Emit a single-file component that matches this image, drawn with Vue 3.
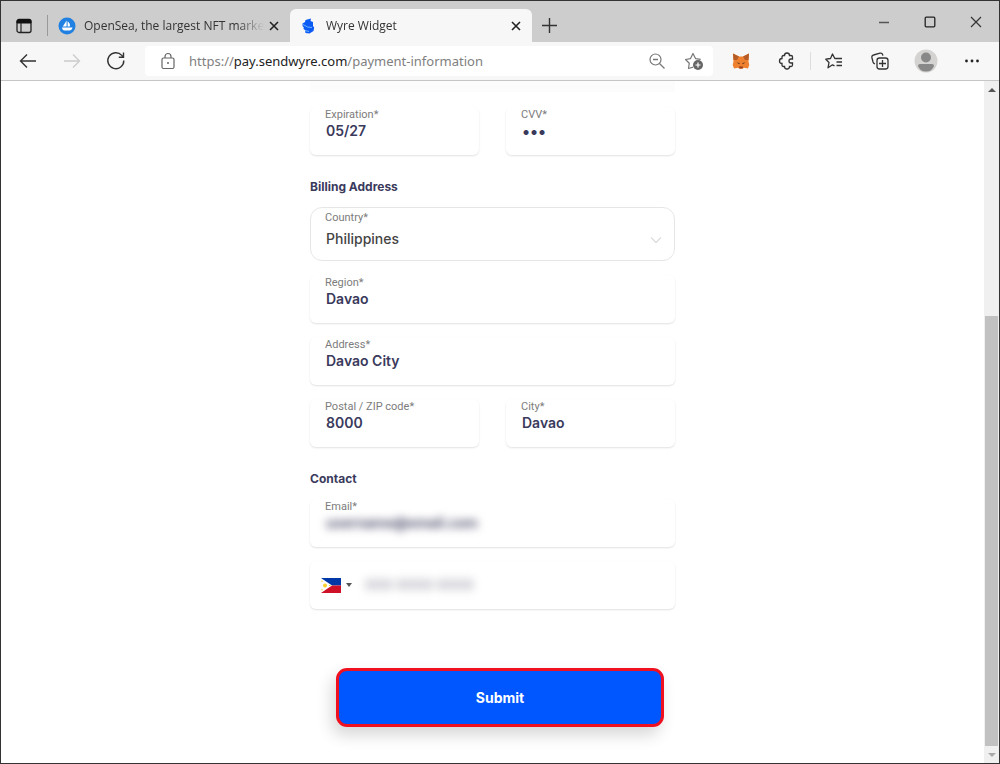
<template>
  <div class="browser">
    <!-- Tab strip -->
    <header class="tab-strip">
      <button class="tab-menu" type="button" aria-label="Tab actions">
        <svg width="18" height="18" viewBox="0 0 18 18">
          <rect x="2" y="2.500" width="14" height="13" rx="2" fill="none" stroke="#222" stroke-width="1.300" />
          <path d="M2 6V4.500Q2 2.500 4 2.500h10q2 0 2 2V6z" fill="#111" stroke="#111" />
          <path d="M6 6v9" stroke="#222" stroke-width="1.200" />
        </svg>
      </button>
      <span class="strip-divider"></span>

      <div v-for="tab in tabs" :key="tab.id" class="tab" :class="{ active: tab.id === activeTab }">
        <svg v-if="tab.id === 'opensea'" class="favicon" width="18" height="18" viewBox="0 0 18 18">
          <circle cx="9" cy="9" r="8.500" fill="#2081e2" />
          <path d="M8.600 3.500v6H4.800zM9.600 4.200q3 2.300 2.200 5.300H9.600z" fill="#fff" />
          <path d="M3.800 10.500h10.700q-.6 3-3.300 3H6.500q-2.300-.5-2.700-3z" fill="#fff" />
        </svg>
        <svg v-else class="favicon" width="18" height="18" viewBox="0 0 18 18">
          <path d="M5.500 3 11 1.500l-.5 2.500 2.500 1v4l1.200 1.500-.7 3.500-4 2.500-4-.5-.5-3-1.500-1 .3-1.500L2.500 9V6.500L5 5z" fill="#0d5bf5" />
          <path d="M3 7.500 7.500 10l4.500.5M5 13.500l4 1" stroke="#6fb4ff" fill="none" />
        </svg>
        <button class="tab-title" type="button" @click="activeTab = tab.id">{{ tab.title }}</button>
        <button class="tab-close" type="button" :aria-label="'Close ' + tab.title">
          <svg width="10" height="10" viewBox="0 0 10 10"><path d="M1 1l8 8M9 1 1 9" stroke="#222" stroke-width="1.600" /></svg>
        </button>
      </div>

      <button class="new-tab" type="button" aria-label="New tab">
        <svg width="15" height="15" viewBox="0 0 15 15"><path d="M7.500 0v15M0 7.500h15" stroke="#333" stroke-width="1.400" /></svg>
      </button>

      <div class="window-controls">
        <button type="button" aria-label="Minimize">
          <svg width="12" height="12" viewBox="0 0 12 12"><path d="M1 6.500h10" stroke="#555" stroke-width="1.500" /></svg>
        </button>
        <button type="button" aria-label="Maximize">
          <svg width="12" height="12" viewBox="0 0 12 12"><rect x="1.200" y="1.200" width="9.600" height="9.600" rx="1" fill="none" stroke="#222" stroke-width="1.300" /></svg>
        </button>
        <button type="button" aria-label="Close">
          <svg width="12" height="12" viewBox="0 0 12 12"><path d="M1 1l10 10M11 1 1 11" stroke="#333" stroke-width="1.200" /></svg>
        </button>
      </div>
    </header>

    <!-- Toolbar -->
    <nav class="toolbar">
      <button class="nav-button" type="button" aria-label="Back">
        <svg width="18" height="16" viewBox="0 0 18 16"><path d="M17 8H1.500M8 1.500 1.500 8 8 14.500" fill="none" stroke="#333" stroke-width="1.400" /></svg>
      </button>
      <button class="nav-button" type="button" aria-label="Forward" disabled>
        <svg width="18" height="16" viewBox="0 0 18 16"><path d="M1 8h15.500M10 1.500 16.500 8 10 14.500" fill="none" stroke="#ccc" stroke-width="1.300" /></svg>
      </button>
      <button class="nav-button" type="button" aria-label="Refresh">
        <svg width="20" height="20" viewBox="0 0 20 20">
          <path d="M17.800 9.500a8 8 0 1 1-2-5.100l1.400 1.500M17.500 1.500v4.700h-4.700" fill="none" stroke="#333" stroke-width="1.400" />
        </svg>
      </button>

      <div class="address-bar">
        <svg width="18" height="18" viewBox="0 0 18 18">
          <rect x="3" y="6" width="12" height="10.500" rx="1.500" fill="none" stroke="#666" stroke-width="1.200" />
          <path d="M6 6V4.500a3 3 0 0 1 6 0V6" fill="none" stroke="#666" stroke-width="1.200" />
          <circle cx="9" cy="11" r="1" fill="#666" />
        </svg>
        <div class="url" role="textbox" aria-label="Address" contenteditable="true" spellcheck="false">https://<b>pay.sendwyre.com</b>/payment-information</div>
        <button type="button" aria-label="Zoom out">
          <svg width="18" height="18" viewBox="0 0 18 18">
            <circle cx="7.500" cy="7.500" r="5.500" fill="none" stroke="#777" stroke-width="1.200" />
            <path d="M5 7.500h5M11.500 11.500l5 5" stroke="#777" stroke-width="1.300" />
          </svg>
        </button>
        <button type="button" aria-label="Add to favorites">
          <svg width="20" height="20" viewBox="0 0 20 20">
            <path d="M9 16.200 4.500 17.500l.8-5.300-3.800-3.700 5-.9L9 2.500l2.500 5.100 5.200.8" fill="none" stroke="#777" stroke-width="1.200" stroke-linejoin="round" />
            <circle cx="14" cy="14" r="5" fill="#666" />
            <path d="M14 11.500v5M11.500 14h5" stroke="#fff" stroke-width="1.200" />
          </svg>
        </button>
      </div>

      <div class="actions">
        <button type="button" aria-label="MetaMask">
          <svg width="18" height="18" viewBox="0 0 18 18">
            <path d="M1 1.500 7 4.500h4l6-3-.5 8 .8 3.500-1.300 3.500-4-.7-1.500 1h-3l-1.500-1-4 .7L.7 13l.8-3.500z" fill="#ee8030" />
            <path d="M1 1.500 7 4.500 5 8H1.500zM17 1.500 11 4.500 13 8h3.500z" fill="#b65c26" />
            <path d="M4.500 10.500 7.500 11v1.300zM13.500 10.500l-3 .5v1.300z" fill="#4a2b1c" />
            <path d="M7 14.500h4l-.5 2h-3z" fill="#963f20" />
          </svg>
        </button>
        <button type="button" aria-label="Extensions">
          <svg width="18" height="18" viewBox="0 0 18 18">
            <path d="M4 5q0-1.500 1.500-1.500h1a2.500 2.500 0 0 1 5 0h1.500q1.500 0 1.500 1.500v2H13a2 2 0 0 0 0 4h1.500v2q0 1.500-1.500 1.500h-1.500a2.500 2.500 0 0 1-5 0h-1Q4 14.500 4 13v-1.500a2.500 2.500 0 0 1 0-5z" fill="none" stroke="#333" stroke-width="1.300" />
          </svg>
        </button>
        <span class="toolbar-divider"></span>
        <button type="button" aria-label="Favorites">
          <svg width="18" height="18" viewBox="0 0 18 18">
            <path d="M9.500 13.800 7.500 12.800l-4.500 3 1-5.300L.8 7.200l4.700-.7L7.500 2l2.300 4.500H17M11.500 10H17M11.500 13.500H17" fill="none" stroke="#333" stroke-width="1.300" stroke-linejoin="round" />
          </svg>
        </button>
        <button type="button" aria-label="Collections">
          <svg width="18" height="18" viewBox="0 0 18 18">
            <rect x="6" y="6" width="11" height="11" rx="2.500" fill="none" stroke="#333" stroke-width="1.300" />
            <path d="M11.500 8v7M8 11.500h7" stroke="#333" stroke-width="1.300" />
            <path d="M4 12Q2.500 11.500 2 10L.9 5.500Q.5 3.500 2.500 3L9 1.200q2-.5 2.600 1.300l.3 1.100" fill="none" stroke="#333" stroke-width="1.300" />
          </svg>
        </button>
        <button type="button" aria-label="Profile">
          <svg width="24" height="24" viewBox="0 0 24 24">
            <circle cx="12" cy="12" r="11.500" fill="#d5d3d1" />
            <circle cx="12" cy="8.500" r="5" fill="#888" />
            <path d="M4 17q0-2 2-2h12q2 0 2 2-2 5.500-8 5.500T4 17z" fill="#888" />
          </svg>
        </button>
        <button type="button" aria-label="Settings and more">
          <svg width="16" height="4" viewBox="0 0 16 4">
            <circle cx="2.500" cy="2" r="1.400" fill="#222" /><circle cx="8" cy="2" r="1.400" fill="#222" /><circle cx="13.500" cy="2" r="1.400" fill="#222" />
          </svg>
        </button>
      </div>
    </nav>

    <div class="viewport">
      <main class="page">
        <form class="payment-form" @submit.prevent>
          <div class="previous-card"></div>

          <div class="row">
            <div v-for="field in cardFields" :key="field.id" class="field">
              <label :for="field.id">{{ field.label }}</label>
              <input :id="field.id" v-model="field.value" :type="field.type" />
            </div>
          </div>

          <h2>Billing Address</h2>
          <div class="stack">
            <div class="select-field">
              <label for="country">Country*</label>
              <select id="country" v-model="country">
                <option>Philippines</option>
              </select>
              <svg class="chevron" width="12" height="8" viewBox="0 0 12 8"><path d="M1 1.500l5 5 5-5" fill="none" stroke="#ddd" stroke-width="1.300" /></svg>
            </div>
            <div v-for="field in addressFields" :key="field.id" class="field">
              <label :for="field.id">{{ field.label }}</label>
              <input :id="field.id" v-model="field.value" type="text" />
            </div>
            <div class="row">
              <div v-for="field in cityFields" :key="field.id" class="field">
                <label :for="field.id">{{ field.label }}</label>
                <input :id="field.id" v-model="field.value" type="text" />
              </div>
            </div>
          </div>

          <h2>Contact</h2>
          <div class="stack">
            <div class="field">
              <label for="email">Email*</label>
              <input id="email" v-model="email" class="masked" type="email" />
            </div>
            <div class="field phone-field">
              <button class="flag-button" type="button" aria-label="Phone country: Philippines">
                <svg width="20" height="15" viewBox="0 0 20 15">
                  <path d="M0 0h20v7.500H0z" fill="#0038a8" />
                  <path d="M0 7.500h20V15H0z" fill="#ce1126" />
                  <path d="M0 0l11 7.500L0 15z" fill="#fff" />
                  <circle cx="4" cy="7.500" r="2" fill="#f8d12e" />
                  <path d="M1 2.500v1.500M1 11v1.500M8 7.500h1.500" stroke="#f8d12e" />
                </svg>
                <svg width="6" height="4" viewBox="0 0 6 4"><path d="M0 0h6L3 4z" fill="#555" /></svg>
              </button>
              <input v-model="phone" class="masked light" type="tel" aria-label="Phone number" />
            </div>
          </div>

          <div class="submit-row">
            <button class="submit" type="submit">Submit</button>
          </div>
        </form>
      </main>

      <div class="scrollbar" aria-hidden="true">
        <span class="scroll-arrow up"></span>
        <span class="scroll-space"></span>
        <span class="scroll-thumb"></span>
        <span class="scroll-arrow down"></span>
      </div>
    </div>
  </div>
</template>

<script setup>
import { ref, reactive } from 'vue'

const activeTab = ref('wyre')

const tabs = [
  { id: 'opensea', title: 'OpenSea, the largest NFT marke' },
  { id: 'wyre', title: 'Wyre Widget' }
]

// Form data
const cardFields = reactive([
  { id: 'expiration', label: 'Expiration*', value: '05/27', type: 'text' },
  { id: 'cvv', label: 'CVV*', value: '000', type: 'password' }
])

const country = ref('Philippines')

const addressFields = reactive([
  { id: 'region', label: 'Region*', value: 'Davao' },
  { id: 'address', label: 'Address*', value: 'Davao City' }
])

const cityFields = reactive([
  { id: 'postal', label: 'Postal / ZIP code*', value: '8000' },
  { id: 'city', label: 'City*', value: 'Davao' }
])

const email = ref('username@email.com')
const phone = ref('000 0000 0000')
</script>

<style>
body {
  margin: 0;
  background: #fff;
}
</style>

<style scoped>
.browser {
  box-sizing: border-box;
  min-height: 100vh;
  display: flex;
  flex-direction: column;
  border: 1px solid #333;
  background: #fff;
  font-family: "Open Sans", "Noto Sans", sans-serif;
}

button {
  display: flex;
  align-items: center;
  justify-content: center;
  padding: 0;
  border: none;
  background: transparent;
  font-family: inherit;
}

/* Tab strip */
.tab-strip {
  display: flex;
  align-items: stretch;
  height: 33px;
  padding-top: 8px;
  background: #cdcdcd;
}

.tab-menu {
  width: 46px;
}

.strip-divider {
  width: 1px;
  margin: 6px 0;
  background: #999;
}

.tab {
  display: flex;
  align-items: center;
  flex: 0 1 242px;
  box-sizing: border-box;
  min-width: 0;
  padding: 0 6px 0 10px;
  border-radius: 6px 6px 0 0;
}

.tab.active {
  background: #f7f7f7;
}

.favicon {
  flex: none;
}

.tab-title {
  flex: 1;
  min-width: 0;
  height: 20px;
  margin-left: 8px;
  display: block;
  overflow: hidden;
  white-space: nowrap;
  text-align: left;
  font-size: 12px;
  line-height: 20px;
  color: #333;
  mask-image: linear-gradient(90deg, #000 85%, transparent);
}

.tab-close {
  flex: none;
  width: 20px;
  height: 20px;
}

.new-tab {
  width: 34px;
}

.window-controls {
  display: flex;
  margin: -8px 0 0 auto;
}

.window-controls button {
  width: 46px;
}

/* Toolbar */
.toolbar {
  display: flex;
  align-items: center;
  height: 38px;
  padding: 0 4px 0 5px;
  border-bottom: 1px solid #c6c6c6;
  background: #f7f7f7;
}

.nav-button {
  width: 44px;
  height: 32px;
}

.address-bar {
  display: flex;
  align-items: center;
  flex: 1;
  min-width: 0;
  height: 30px;
  margin: 0 5px 0 7px;
  padding: 0 1px 0 14px;
  border-radius: 4px;
  background: #fff;
}

.url {
  flex: 1;
  min-width: 0;
  margin-left: 12px;
  overflow: hidden;
  white-space: nowrap;
  font-family: "Noto Sans", sans-serif;
  font-size: 13px;
  line-height: 20px;
  color: #808080;
  outline: none;
}

.url b {
  font-weight: 400;
  color: #222;
}

.address-bar button {
  width: 37px;
  height: 28px;
}

.actions {
  display: flex;
  align-items: center;
}

.actions button {
  width: 46px;
  height: 30px;
}

.toolbar-divider {
  width: 1px;
  height: 18px;
  background: #ddd;
}

/* Page */
.viewport {
  display: flex;
  flex: 1;
}

.page {
  flex: 1;
  min-width: 0;
}

.payment-form {
  box-sizing: border-box;
  max-width: 365px;
  margin: 0 auto;
  padding-bottom: 34px;
  font-family: Inter, "Liberation Sans", sans-serif;
}

.previous-card {
  height: 11px;
  margin-bottom: 15px;
  background: #fcfcfc;
}

.row {
  display: grid;
  grid-template-columns: 1fr 1fr;
  gap: 27px;
}

.stack {
  display: flex;
  flex-direction: column;
  gap: 14px;
}

h2 {
  margin: 22px 0 10px;
  font-size: 12px;
  line-height: 20px;
  font-weight: 700;
  color: #3a3a5c;
}

.field {
  box-sizing: border-box;
  display: flex;
  flex-direction: column;
  min-width: 0;
  height: 48px;
  padding: 1px 15px 0;
  border-radius: 6px;
  background: #fff;
  box-shadow: 0 1px 2px rgba(0, 0, 0, 0.12);
}

label {
  font-family: Roboto, "Liberation Sans", sans-serif;
  font-size: 11px;
  line-height: 14px;
  color: #7c7c7c;
}

.field input {
  width: 100%;
  min-width: 0;
  height: 18px;
  padding: 0 0 0 1px;
  box-sizing: border-box;
  border: none;
  outline: none;
  background: transparent;
  font-family: inherit;
  font-size: 14px;
  line-height: 18px;
  font-weight: 600;
  color: #3a3a5c;
}

.field input[type="password"] {
  font-size: 16px;
}

.select-field {
  position: relative;
  box-sizing: border-box;
  display: flex;
  flex-direction: column;
  height: 54px;
  padding: 3px 14px 0;
  border: 1px solid #e6e6e6;
  border-radius: 12px;
}

.select-field select {
  height: 26px;
  padding: 0 0 0 1px;
  border: none;
  outline: none;
  appearance: none;
  background: transparent;
  font-family: inherit;
  font-size: 14px;
  font-weight: 500;
  color: #444;
}

.chevron {
  position: absolute;
  right: 12px;
  bottom: 16px;
  pointer-events: none;
}

.phone-field {
  flex-direction: row;
  align-items: center;
  padding: 0 15px 0 11px;
}

.flag-button {
  flex: none;
  gap: 5px;
  margin-right: 12px;
}

.field .masked {
  filter: blur(4px);
}

.field .light {
  color: #a8a8b4;
}

.submit-row {
  padding: 59px 11px 0 26px;
}

.submit {
  width: 100%;
  height: 59px;
  border: 3px solid #f01020;
  border-radius: 11px;
  background: #0057ff;
  box-shadow: -4px 8px 16px rgba(0, 0, 0, 0.16);
  font-size: 14px;
  font-weight: 700;
  color: #fff;
}

/* Scrollbar */
.scrollbar {
  display: flex;
  flex-direction: column;
  align-items: center;
  width: 15px;
  background: #f0f0f0;
}

.scroll-arrow {
  display: flex;
  align-items: center;
  justify-content: center;
  height: 17px;
}

.scroll-arrow::before {
  content: "";
  border: 4px solid transparent;
}

.scroll-arrow.up::before {
  border-top: none;
  border-bottom-color: #555;
}

.scroll-arrow.down::before {
  border-bottom: none;
  border-top-color: #aaa;
}

.scroll-space {
  flex: 218;
}

.scroll-thumb {
  flex: 430;
  width: 13px;
  background: #c1c1c1;
}
</style>
